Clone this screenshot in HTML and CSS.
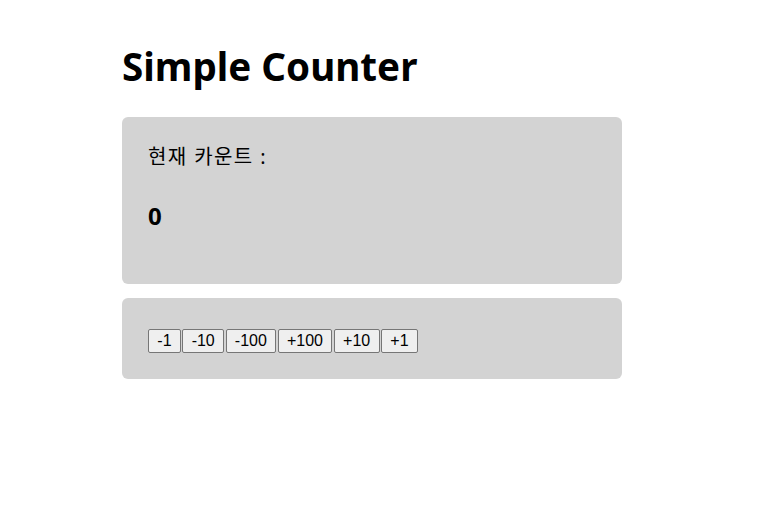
FILE: index.html
```html
<!DOCTYPE html>
<html lang="ko">
<head>
    <meta charset="UTF-8">
    <meta name="viewport" content="width=device-width, initial-scale=1.0">
    <title>Simple Counter</title>
    <link rel="stylesheet" href="styles.css">
</head>
<body>
    <div class="container">
        <h1>Simple Counter</h1>
        <div class="card count-card">
            <p class="count-label">현재 카운트 :</p>
            <div id="countValue" class="count-value">0</div>
        </div>
        <div class="card button-card">
            <button data-step="-1">-1</button>
            <button data-step="-10">-10</button>
            <button data-step="-100">-100</button>
            <button data-step="100">+100</button>
            <button data-step="10">+10</button>
            <button data-step="1">+1</button>
        </div>
    </div>

    <script>
        let count = 0;
        const countValue = document.getElementById('countValue');
        document.querySelectorAll('.button-card button').forEach(btn => {
            btn.addEventListener('click', () => {
                count += Number(btn.dataset.step);
                countValue.textContent = count;
            });
        });
    </script>
</body>
</html>
```

FILE: styles.css
```css
body {
    font-family: "Noto Sans", "Noto Sans CJK KR", sans-serif;
    margin: 0;
    padding: 0 0 0 122px;
    background-color: #ffffff;
    color: #000;
}
.container {
    width: 500px;
    padding-top: 38px;
}
h1 {
    font-size: 38.6px;
    font-weight: bold;
    line-height: 56px;
    margin: 0 0 23px 0;
}
.card {
    background: #d3d3d3;
    border-radius: 6px;
    padding: 26px;
    margin-bottom: 14px;
}
.count-card {
    height: 115px;
}
.count-label {
    font-size: 20px;
    letter-spacing: 1.4px;
    line-height: 28px;
    margin: 0;
}
.count-value {
    font-size: 24px;
    font-weight: bold;
    line-height: 34px;
    margin-top: 28px;
}
.button-card {
    display: flex;
    gap: 1.5px;
    padding: 31px 26px 26px 26px;
}
button {
    font-family: "Liberation Sans", Arial, sans-serif;
    font-size: 16px;
    height: 24px;
    padding: 0 8.3px;
    background: #efefef;
    border: 1px solid #767676;
    border-radius: 2px;
    color: #000;
    cursor: pointer;
}
```
